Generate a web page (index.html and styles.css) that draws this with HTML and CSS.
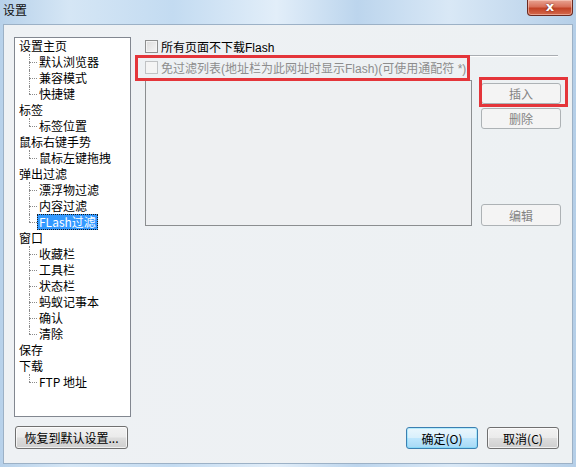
FILE: index.html
```html
<!DOCTYPE html>
<html lang="zh">
<head>
<meta charset="utf-8">
<title>设置</title>
<link rel="stylesheet" href="styles.css">
</head>
<body>
<div class="window">
  <div class="titlebar">
    <span class="title">设置</span>
    <div class="close"><span>x</span></div>
  </div>
  <div class="client">
    <div class="tree">
      <ul class="roots">
        <li>设置主页
          <ul><li>默认浏览器</li><li>兼容模式</li><li>快捷键</li></ul>
        </li>
        <li>标签
          <ul><li>标签位置</li></ul>
        </li>
        <li>鼠标右键手势
          <ul><li>鼠标左键拖拽</li></ul>
        </li>
        <li>弹出过滤
          <ul><li>漂浮物过滤</li><li>内容过滤</li><li><span class="selected">FLash过滤</span></li></ul>
        </li>
        <li>窗口
          <ul><li>收藏栏</li><li>工具栏</li><li>状态栏</li><li>蚂蚁记事本</li><li>确认</li><li>清除</li></ul>
        </li>
        <li>保存</li>
        <li>下载
          <ul><li>FTP 地址</li></ul>
        </li>
      </ul>
    </div>
    <div class="panel">
      <div class="opt opt1"><span class="check"></span><span>所有页面不下载Flash</span></div>
      <div class="sep"></div>
      <div class="opt opt2 disabled"><span class="check"></span><span>免过滤列表(地址栏为此网址时显示Flash)(可使用通配符 *):</span></div>
      <div class="list-row">
        <div class="listbox"></div>
        <div class="side-buttons">
          <div class="btn off b-insert">插入</div>
          <div class="btn off b-delete">删除</div>
          <div class="btn off b-edit">编辑</div>
        </div>
      </div>
    </div>
    <div class="left-foot">
      <div class="btn b-reset">恢复到默认设置...</div>
    </div>
    <div class="right-foot">
      <div class="btn default b-ok">确定(O)</div>
      <div class="btn b-cancel">取消(C)</div>
    </div>
  </div>
  <div class="mark mark1"></div>
  <div class="mark mark2"></div>
</div>
</body>
</html>
```

FILE: styles.css
```css
* { box-sizing: border-box; }
html, body { margin: 0; padding: 0; }
body {
  width: 576px;
  height: 467px;
  overflow: hidden;
  font-family: "Liberation Sans", "Noto Sans CJK SC", sans-serif;
  font-size: 12px;
  color: #000;
}
.window {
  position: relative;
  width: 576px;
  height: 467px;
  background: linear-gradient(90deg, #b7d1ea 0%, #d5e6f5 12%, #c3dbf1 30%, #e2eef9 48%, #bcd5ed 62%, #d9e8f6 78%, #b5cfe8 100%);
  display: flex;
  flex-direction: column;
}
.titlebar {
  height: 24px;
  position: relative;
  flex: none;
}
.title {
  position: absolute;
  left: 3px;
  top: 3px;
  font-size: 12px;
  line-height: 14px;
  color: #111;
  font-family: "Noto Sans CJK SC", sans-serif;
}
.close {
  position: absolute;
  top: 0;
  right: 3px;
  width: 46px;
  height: 16px;
  border: 1px solid #6b2a20;
  border-top: none;
  border-radius: 0 0 4px 4px;
  background: linear-gradient(#e8a392 0%, #d8705a 45%, #c24226 55%, #d46a4d 100%);
  box-shadow: inset 0 0 0 1px rgba(255, 220, 210, 0.5);
  display: flex;
  align-items: center;
  justify-content: center;
}
.close span {
  color: #fff;
  font-family: "DejaVu Sans", sans-serif;
  font-weight: bold;
  font-size: 13px;
  line-height: 13px;
  margin-top: -2px;
  text-shadow: 0 0 2px #5a1a10;
}
.client {
  flex: 1;
  margin: 0 3px 3px 3px;
  border: 1px solid #9cb1c6;
  background: linear-gradient(90deg, #eef1f4, #edf1f3);
  padding: 12px 0 0 10px;
  display: grid;
  grid-template-columns: 117px 1fr;
  grid-template-rows: 380px auto;
  column-gap: 14px;
}
/* tree */
.tree {
  border: 1px solid #828790;
  background: #fff;
  font-family: "Noto Sans CJK SC", sans-serif;
  overflow: hidden;
}
.tree ul {
  list-style: none;
  margin: 0;
  padding: 0;
}
.roots {
  padding-left: 4px !important;
  padding-top: 0;
}
.tree li {
  line-height: 16px;
  white-space: nowrap;
}
.tree li ul {
  padding-left: 20px;
}
.tree li ul li {
  position: relative;
}
.tree li ul li::before {
  content: "";
  position: absolute;
  left: -10px;
  top: 8px;
  width: 8px;
  border-top: 1px dotted #8a8a8a;
}
.tree li ul li::after {
  content: "";
  position: absolute;
  left: -10px;
  top: 0;
  height: 16px;
  border-left: 1px dotted #8a8a8a;
}
.tree li ul li:last-child::after {
  height: 8px;
}
.selected {
  display: inline-block;
  vertical-align: top;
  background: #3399ff;
  color: #fff;
  height: 16px;
  line-height: 14px;
  padding: 0 1px;
  margin-left: -2px;
  border: 1px dotted #1a1a1a;
  font-family: "Noto Sans CJK SC", sans-serif;
}
/* right panel */
.panel {
  display: flex;
  flex-direction: column;
}
.opt {
  display: flex;
  align-items: center;
  height: 13px;
  white-space: nowrap;
}
.opt1 { margin-top: 3px; }
.check {
  width: 13px;
  height: 13px;
  flex: none;
  border: 1px solid #8e8f8f;
  background: linear-gradient(135deg, #dcdcdc, #f6f6f6);
  box-shadow: inset 0 0 0 1px #f4f4f4;
  margin-right: 3px;
}
.disabled { color: #8d8d8d; }
.disabled .check {
  border-color: #c0c2c4;
  background: #f4f4f4;
  box-shadow: none;
}
.sep {
  margin-top: 2px;
  width: 413px;
  height: 2px;
  border-top: 1px solid #a9adb2;
  border-bottom: 1px solid #ffffff;
}
.opt2 { margin-top: 4px; }
.list-row {
  display: flex;
  margin-top: 6px;
}
.listbox {
  width: 327px;
  height: 146px;
  border: 1px solid #8b8e90;
  background: #eef0f2;
}
.side-buttons {
  margin-left: 9px;
  display: flex;
  flex-direction: column;
}
.btn {
  display: flex;
  align-items: center;
  justify-content: center;
  border: 1px solid #707070;
  border-radius: 3px;
  background: linear-gradient(#f2f2f2 0%, #ebebeb 48%, #dddddd 52%, #cfcfcf 100%);
  box-shadow: inset 0 0 0 1px rgba(255, 255, 255, 0.7);
  font-family: "Noto Sans CJK SC", sans-serif;
  font-size: 12px;
  white-space: nowrap;
  color: #000;
}
.btn.off {
  border-color: #adb2b5;
  background: #f4f4f4;
  box-shadow: none;
  color: #838383;
}
.side-buttons .btn { width: 80px; height: 21px; }
.b-insert { margin-top: 3px; }
.b-delete { margin-top: 4px; }
.b-edit { margin-top: 75px; height: 22px !important; }
.left-foot {
  padding-top: 9px;
  padding-left: 1px;
}
.b-reset { width: 113px; height: 23px; }
.right-foot {
  padding-top: 10px;
  padding-right: 13px;
  display: flex;
  justify-content: flex-end;
  gap: 9px;
}
.b-ok, .b-cancel { width: 72px; height: 22px; }
.btn.default {
  border-color: #3c7fb1;
  background: linear-gradient(#eaf6fd 0%, #d9f0fc 48%, #bee6fd 52%, #a7d9f5 100%);
  box-shadow: inset 0 0 0 1px #48d8fb55;
}
/* annotation overlays */
.mark {
  position: absolute;
  border: 3px solid #e4353a;
}
.mark1 { left: 135px; top: 55px; width: 335px; height: 26px; }
.mark2 { left: 479px; top: 77px; width: 89px; height: 30px; }
```
